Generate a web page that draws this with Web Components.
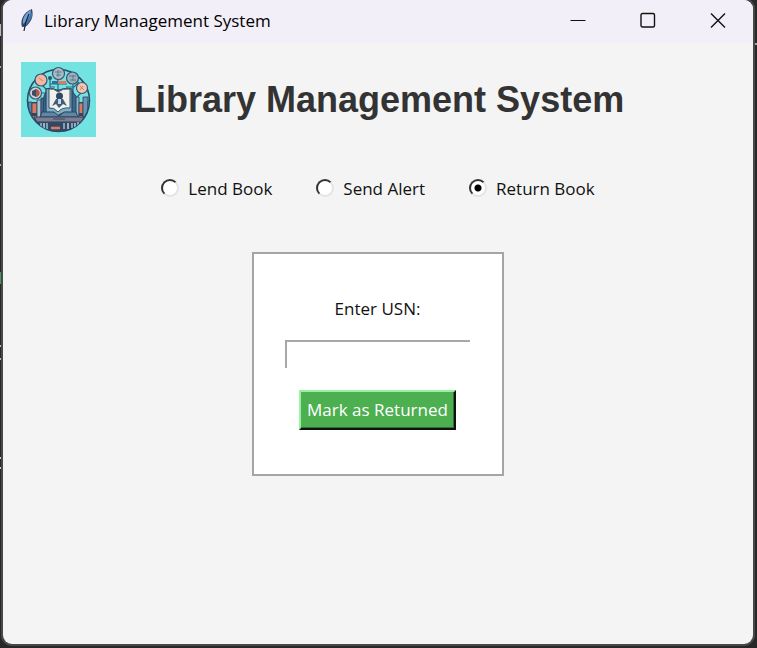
<!DOCTYPE html>
<html lang="en">
<head>
<meta charset="utf-8">
<title>Library Management System</title>
<style>
  html { height: 100%; }
  body {
    margin: 0; min-height: 100%; box-sizing: border-box; padding: 0 4px 4px 3px;
    display: flex; font-family: "Open Sans", "Noto Sans", sans-serif; font-size: 17px; line-height: 24px; color: #111;
    background-color: #282828;
    background-image:
      linear-gradient(#bbb, #bbb), linear-gradient(#aaa, #aaa), linear-gradient(#aaa, #aaa),
      linear-gradient(#888, #888), linear-gradient(#3e9a63, #3e9a63), linear-gradient(#bbb, #bbb),
      linear-gradient(#bbb, #bbb), linear-gradient(#888, #888), linear-gradient(#ccc, #ccc),
      linear-gradient(#ccc, #ccc), linear-gradient(#999, #999), linear-gradient(#888, #888),
      linear-gradient(#777, #777), linear-gradient(#aaa, #aaa), linear-gradient(#ccc, #ccc);
    background-repeat: no-repeat;
    background-size: 2px 12px, 3px 2px, 3px 2px, 1px 16px, 3px 12px, 2px 2px, 2px 2px, 2px 16px, 3px 2px, 2px 2px, 2px 12px, 1px 16px, 2px 16px, 4px 2px, 2px 10px;
    background-position: 0 24px, 0 66px, 0 164px, 2px 237px, 0 272px, 0 345px, 0 358px, 1px 376px, 0 457px, 0 467px, 1px 488px, 2px 561px, 1px 596px, right 0 top 43px, right 2px top 128px;
  }
</style>
</head>
<body>
<app-window>
  <title-bar slot="bar">Library Management System</title-bar>
  <page-header>Library Management System</page-header>
  <mode-picker></mode-picker>
  <return-form></return-form>
</app-window>

<script>
const define = (name, html) => {
  const template = document.createElement('template');
  template.innerHTML = html;
  customElements.define(name, class extends HTMLElement {
    constructor() {
      super();
      this.attachShadow({ mode: 'open' }).append(template.content.cloneNode(true));
    }
  });
};

define('app-window', `
<style>
  :host { flex: 1; min-width: 0; display: flex; flex-direction: column; background: #f4f4f4;
    border-radius: 9px; overflow: hidden; box-shadow: 0 0 0 2px #484848; }
  main { display: flex; flex-direction: column; flex: 1; }
</style>
<slot name="bar"></slot><main><slot></slot></main>`);

define('title-bar', `
<style>
  :host { display: flex; align-items: center; height: 43px; background: #f3eff8; color: #000; }
  .feather { width: 16px; height: 24px; margin: 0 9px 3px 16px; flex: none; }
  .name { flex: 1; white-space: nowrap; padding-bottom: 2px; }
  button { width: 70px; height: 43px; border: 0; padding: 0 0 3px; background: none; display: grid; place-items: center; }
  button svg { width: 16px; height: 16px; fill: none; stroke: #111; stroke-width: 1.4; }
</style>
<svg class="feather" viewBox="0 0 16 24" aria-hidden="true">
  <path d="M3 19C1 13 4 4 13 1c1 4 1 9-2 13-2 3-4 5-8 5Z" fill="#33455e"/>
  <path d="M4 16C3 10 7 4 12 2c0 5-2 10-8 14Z" fill="#6f9fd6"/>
  <path d="M12 5c1 4-2 8-6 12" stroke="#4776b0" stroke-width="2" fill="none"/>
  <path d="M10 6C8 10 6 14 5 23" stroke="#1a2636" stroke-width="1.2" fill="none"/>
</svg>
<span class="name"><slot></slot></span>
<button type="button" aria-label="Minimize"><svg viewBox="0 0 16 16"><path d="M.5 8.5h15" stroke-width="1"/></svg></button>
<button type="button" aria-label="Maximize"><svg viewBox="0 0 16 16"><rect x="1" y="1.500" width="13.500" height="13.500" rx="1.500"/></svg></button>
<button type="button" aria-label="Close"><svg viewBox="0 0 16 16"><path d="M1 1.5l14 14M15 1.5l-14 14"/></svg></button>`);

define('library-logo', `
<style>:host { display: block; width: 75px; height: 75px; flex: none; } svg { display: block; width: 100%; height: 100%; }</style>
<svg viewBox="0 0 75 75" role="img" aria-label="Library logo">
  <defs><clipPath id="disc"><circle cx="37.500" cy="38.500" r="31"/></clipPath></defs>
  <path d="M0 0h75v75H0z" fill="#72e3e1"/>
  <g clip-path="url(#disc)">
    <path d="M5 40h65v30H5z" fill="#2f4664"/>
    <g stroke="#2c4260" stroke-width=".8">
      <path d="M7 40h4v18H7z" fill="#5787ac"/><path d="M11 41h5v17h-5z" fill="#dc7a5c"/><path d="M16 38h4v20h-4z" fill="#a9c6d0"/>
      <path d="M20 36h4v20h-4z" fill="#47698f"/><path d="M54 35h4v21h-4z" fill="#89b8c9"/><path d="M58 41h4v16h-4z" fill="#dc7a5c"/>
      <path d="M62 35h5v21h-5z" fill="#6796ba"/><path d="M67 39h4v17h-4z" fill="#a8c5cd"/>
    </g>
    <path d="M11 51h5v3h-5zM58 51h4v3h-4z" fill="#2f4664"/>
  </g>
  <circle cx="37.500" cy="38.500" r="31" fill="none" stroke="#2c4c69" stroke-width="1.600"/>
  <g fill="none" stroke="#2f6379" stroke-width="1.200">
    <path d="M20 22l6 6v6M29 16v9h5M37 17v12M45 25h8l5-5M52 22v12M56 35l7-7M26 31h-6l-4 4M29 22h17"/>
  </g>
  <circle cx="29" cy="16" r="2" fill="#29556d"/><path d="M31 19h6v3h-6z" fill="#327199"/><path d="M37 19h8v3h-8z" fill="#d87b62"/>
  <g stroke="#3a5570" stroke-width="1.200">
    <circle cx="37.500" cy="11.500" r="6" fill="#a9bdc6"/><circle cx="20" cy="18" r="6" fill="#f0b8a2"/>
    <circle cx="51.500" cy="16" r="6" fill="#98b2be"/><circle cx="61" cy="26" r="5.500" fill="#eec6b6"/>
    <circle cx="14.500" cy="31" r="6" fill="#ccd3d4"/>
  </g>
  <path d="M34 10h7M35 13h5M37 8v7M48 14h7M49 18h6M52 13v6" stroke="#607b8d" fill="none"/>
  <path d="M15 27c5 1 5 7 0 8z" fill="#b95247"/><path d="M11 29l4-2v8l-4-2z" fill="#36506b"/>
  <path d="M59 24l4 4m-1-4-3 4M18 16l4 3" stroke="#d67d66" fill="none"/>
  <path d="M23 34l3-6h24l5 6v19H22z" fill="#376a8c" stroke="#2c4260"/>
  <path d="M25 27q6-2 12 2q6-4 14-2v24q-8-2-14 3q-6-5-12-3z" fill="#7fb0c4" stroke="#2c4260" stroke-width="1.200"/>
  <path d="M28 27q5-1 9 3q5-4 12-3v19q-8-1-12 4q-4-5-9-4z" fill="#f1f0eb" stroke="#3a5570"/>
  <circle cx="38.500" cy="34" r="3.500" fill="#304866"/><path d="M31 44l4-7h7l4 7-4-2-4 4-3-4z" fill="#405d7e"/><path d="M37 37h3v5h-3z" fill="#c6d9df"/>
  <path d="M21 50h12l5 4 5-4h12l2 5H19z" fill="#5e87a3" stroke="#2c4260"/>
  <g clip-path="url(#disc)">
    <path d="M13 55h50l-3 5H16z" fill="#7c7f8f" stroke="#34435d"/><path d="M32 56h12v2H32z" fill="#5c6277"/>
    <path d="M16 60h43v9H16z" fill="#344865"/>
    <path d="M20 61v5M26 61v6M43 61v6M51 61v5M57 60v5" stroke="#78a5bd" stroke-width="2"/>
    <path d="M30 66h9" stroke="#e07b5f" stroke-width="2.500"/><path d="M23 61v6M47 61v6M54 61v4" stroke="#c5d4d7" stroke-width="1.500"/>
  </g>
</svg>`);

define('page-header', `
<style>
  :host { display: flex; align-items: center; gap: 38px; padding: 19px 18px 0; }
  h1 { margin: 0; font: bold 36px/48px "Liberation Sans", Arial, sans-serif; color: #333; white-space: nowrap; }
</style>
<library-logo></library-logo><h1><slot></slot></h1>`);

define('mode-picker', `
<style>
  :host { display: block; margin-top: 40px; }
  fieldset { border: 0; margin: 0; padding: 0; display: flex; justify-content: center; gap: 44px; }
  label { display: flex; align-items: center; gap: 9px; white-space: nowrap; }
  input { appearance: none; box-sizing: border-box; width: 18px; height: 18px; margin: 0 0 2px; border-radius: 50%;
    border: 2px solid; border-color: #333 #e4e4e4 #e4e4e4 #333; background: #fff; }
  input:checked { background: radial-gradient(circle, #000 3px, #fff 4px); }
</style>
<fieldset aria-label="Mode">
  <label><input type="radio" name="mode">Lend Book</label>
  <label><input type="radio" name="mode">Send Alert</label>
  <label><input type="radio" name="mode" checked>Return Book</label>
</fieldset>`);

define('return-form', `
<style>
  :host { display: block; align-self: center; margin: 51px 0 32px; }
  form { display: flex; flex-direction: column; align-items: center; background: #fff; border: 2px solid #a5a5a5; padding: 43px 32px 44px 31px; }
  input { box-sizing: border-box; width: 185px; height: 28px; margin: 19px 0 22px; padding: 2px 4px; font: inherit;
    border: 0 solid #a8a8a8; border-width: 2px 0 0 2px; border-radius: 0; background: #fff; outline: none; }
  button { font: inherit; color: #fff; background: #4caf50; padding: 6px; white-space: nowrap;
    border: 2px solid; border-color: #9bef9f #111 #111 #9bef9f; border-radius: 0; box-shadow: inset -1px -1px #2e7131; }
</style>
<form>
  <label for="usn">Enter USN:</label>
  <input id="usn" type="text" autocomplete="off">
  <button type="button">Mark as Returned</button>
</form>`);
</script>
</body>
</html>
